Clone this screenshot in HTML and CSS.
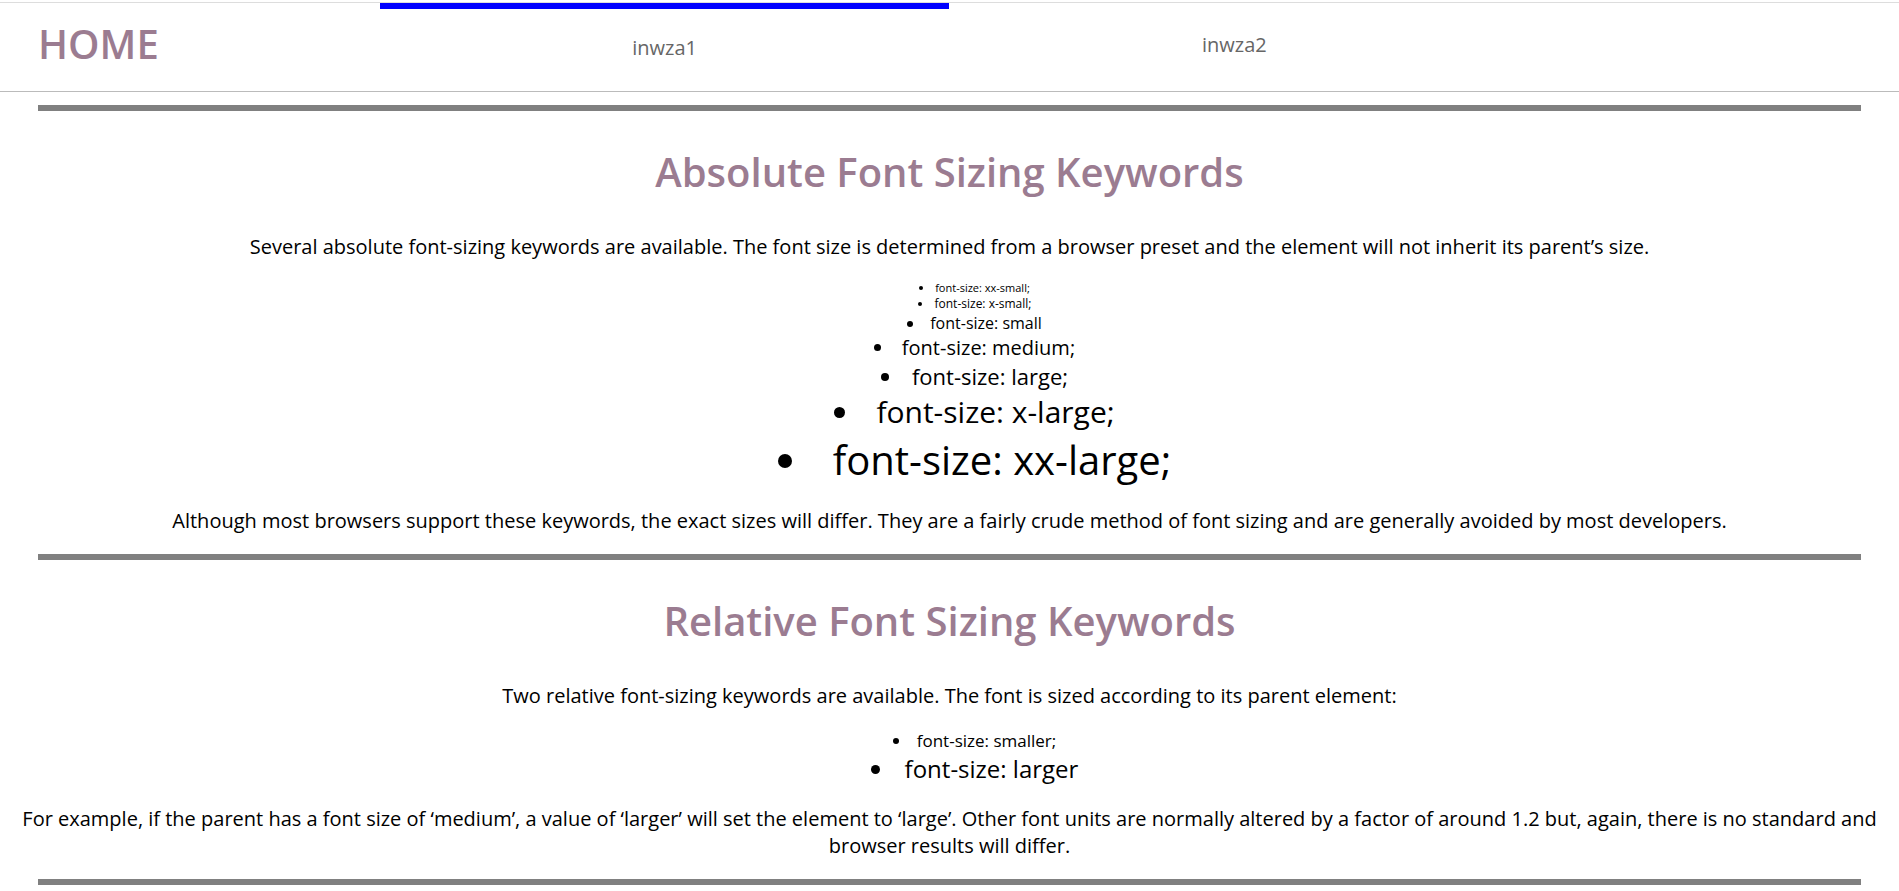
FILE: index.html
```html
<!DOCTYPE html>
<html lang="en">
<head>
<meta charset="utf-8">
<title>Font Sizing Keywords</title>
<link rel="stylesheet" href="styles.css">
</head>
<body>
<nav class="navbar">
  <a class="brand" href="#">HOME</a>
  <a class="tab tab-active" href="#absolute">inwza1</a>
  <a class="tab" href="#relative">inwza2</a>
</nav>
<main>
  <hr class="rule">
  <section id="absolute">
    <h1 class="title">Absolute Font Sizing Keywords</h1>
    <p>Several absolute font-sizing keywords are available. The font size is determined from a browser preset and the element will not inherit its parent’s size.</p>
    <ul class="sizes">
      <li class="xx-small">font-size: xx-small;</li>
      <li class="x-small">font-size: x-small;</li>
      <li class="small">font-size: small</li>
      <li class="medium">font-size: medium;</li>
      <li class="large">font-size: large;</li>
      <li class="x-large">font-size: x-large;</li>
      <li class="xx-large">font-size: xx-large;</li>
    </ul>
    <p>Although most browsers support these keywords, the exact sizes will differ. They are a fairly crude method of font sizing and are generally avoided by most developers.</p>
  </section>
  <hr class="rule">
  <section id="relative">
    <h1 class="title">Relative Font Sizing Keywords</h1>
    <p>Two relative font-sizing keywords are available. The font is sized according to its parent element:</p>
    <ul class="sizes">
      <li class="smaller">font-size: smaller;</li>
      <li class="larger">font-size: larger</li>
    </ul>
    <p>For example, if the parent has a font size of ‘medium’, a value of ‘larger’ will set the element to ‘large’. Other font units are normally altered by a factor of around 1.2 but, again, there is no standard and browser results will differ.</p>
  </section>
  <hr class="rule">
</main>
</body>
</html>
```
FILE: styles.css
```css
body {
  margin: 0;
  background: #fff;
  color: #000;
  font-family: "Open Sans", sans-serif;
  font-size: 20px;
  text-align: center;
}

.navbar {
  display: grid;
  grid-template-columns: 20% 30% 30%;
  margin-top: 2px;
  height: 88px;
  border-top: 1px solid #ddd;
  border-bottom: 1px solid #bbb;
}

.brand {
  padding: 13px 0 0 38px;
  color: #9b7c91;
  font-size: 40px;
  font-weight: 600;
  text-align: left;
  text-decoration: none;
}

.tab {
  padding-top: 28px;
  color: #666;
  text-decoration: none;
}

.tab-active {
  padding-top: 25px;
  border-top: 6px solid #00f;
}

main {
  padding-top: 13px;
}

.rule {
  height: 6px;
  margin: 0 2%;
  border: 0;
  background: #808080;
}

.title {
  margin: 33px 0 34px;
  color: #9b7c91;
  font-size: 40px;
  font-weight: 600;
}

p {
  margin: 20px 0;
}

.sizes {
  margin: 20px 0;
  padding-left: 50px;
  list-style: disc inside;
}

.xx-small { font-size: 11px; }
.x-small { font-size: 12px; }
.small { font-size: 16px; }
.medium { font-size: 20px; }
.large { font-size: 22px; }
.x-large { font-size: 30px; }
.xx-large { font-size: 40px; }
.smaller { font-size: 17px; }
.larger { font-size: 24px; }
```
